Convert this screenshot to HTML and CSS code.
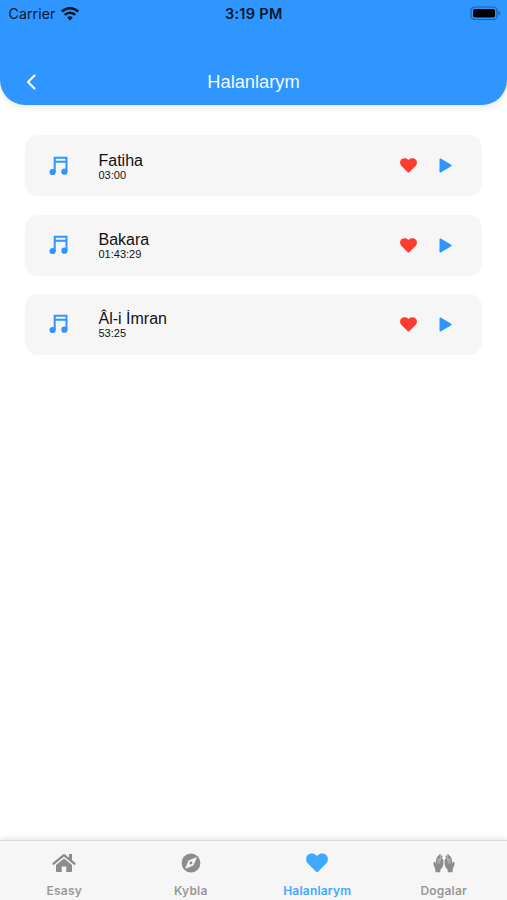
FILE: index.html
```html
<!DOCTYPE html>
<html lang="tk">
<head>
  <meta charset="UTF-8">
  <meta name="viewport" content="width=device-width, initial-scale=1.0">
  <title>Halanlarym</title>
  <link rel="stylesheet" href="styles.css">
</head>
<body>

  <!-- Shared icons -->
  <svg class="sprite" width="0" height="0">
    <symbol id="music" viewBox="0 0 20 20">
      <path d="M5.700 16V1.700H17.500V15.500M5.700 5.800H17.500" fill="none" stroke="currentColor" stroke-width="2"/>
      <circle cx="3.600" cy="16" r="3.100" fill="currentColor"/>
      <circle cx="15.400" cy="15.700" r="3.100" fill="currentColor"/>
    </symbol>
    <symbol id="heart" viewBox="0 0 22 19">
      <path d="M11 18.6c-.4 0-.7-.2-1-.4L1.9 10.1C-.6 7.5-.4 3.400 1.900 1.500 4.600-.8 8.300-.3 10.200 1.700l.8.800.8-.8c1.900-2 5.600-2.500 8.300-.2 2.300 1.900 2.500 6 0 8.600L12 18.200c-.3.2-.6.4-1 .4z" fill="currentColor"/>
    </symbol>
    <symbol id="play" viewBox="0 0 13 15">
      <path d="M1.300 1.300v12.400L11.800 7.500z" fill="currentColor" stroke="currentColor" stroke-width="1.600" stroke-linejoin="round"/>
    </symbol>
  </svg>

  <header class="header">
    <div class="status-bar">
      <div class="carrier">
        <span>Carrier</span>
        <svg width="18" height="14" viewBox="0 0 18 14" fill="none" stroke="#07182b" stroke-width="2.600">
          <path d="M.8 4.600a11.600 11.600 0 0 1 16.400 0M3.800 7.900a7.400 7.400 0 0 1 10.400 0"/>
          <path d="M9 13.500L6.200 10.700a4 4 0 0 1 5.600 0z" fill="#07182b" stroke="none"/>
        </svg>
      </div>
      <span class="time">3:19 PM</span>
      <div class="battery">
        <svg width="31" height="15" viewBox="0 0 31 15">
          <rect x="1" y="1" width="26" height="12.500" rx="3.800" fill="none" stroke="#1c5fa6" stroke-width="1.200"/>
          <rect x="3" y="3" width="22" height="8.500" rx="1.800" fill="#000"/>
          <path d="M28.500 5v4.500q1.700-.7 1.700-2.250T28.500 5z" fill="#1c5fa6"/>
        </svg>
      </div>
    </div>
    <div class="title-bar">
      <svg class="back" width="10" height="16" viewBox="0 0 10 16">
        <path d="M8.500 1.500L2 8l6.500 6.500" fill="none" stroke="#fff" stroke-width="2.100" stroke-linecap="round" stroke-linejoin="round"/>
      </svg>
      <h1>Halanlarym</h1>
    </div>
  </header>

  <main class="list">
    <div class="card">
      <svg class="music"><use href="#music"/></svg>
      <div class="info">
        <h2>Fatiha</h2>
        <p>03:00</p>
      </div>
      <svg class="like"><use href="#heart"/></svg>
      <svg class="play"><use href="#play"/></svg>
    </div>
    <div class="card">
      <svg class="music"><use href="#music"/></svg>
      <div class="info">
        <h2>Bakara</h2>
        <p>01:43:29</p>
      </div>
      <svg class="like"><use href="#heart"/></svg>
      <svg class="play"><use href="#play"/></svg>
    </div>
    <div class="card">
      <svg class="music"><use href="#music"/></svg>
      <div class="info">
        <h2>Âl-i İmran</h2>
        <p>53:25</p>
      </div>
      <svg class="like"><use href="#heart"/></svg>
      <svg class="play"><use href="#play"/></svg>
    </div>
  </main>

  <nav class="tabs">
    <a class="tab">
      <svg width="24" height="20" viewBox="0 0 24 20">
        <path d="M1.500 10.700L12 2.100l10.500 8.600" fill="none" stroke="currentColor" stroke-width="2.300" stroke-linecap="round" stroke-linejoin="round"/>
        <path d="M17 1h3v7l-3-2.500zM12 5.400l8 6.500V18q0 1-1 1h-4.700v-5.500H9.700V19H5q-1 0-1-1v-6.100z" fill="currentColor"/>
      </svg>
      <span>Esasy</span>
    </a>
    <a class="tab">
      <svg width="20" height="20" viewBox="0 0 20 20">
        <circle cx="10" cy="10" r="9.400" fill="currentColor"/>
        <path d="M15.300 4.700L12.200 12.200 4.700 15.300 7.800 7.800z" fill="#f6f6f6" stroke="#f6f6f6" stroke-width=".8" stroke-linejoin="round"/>
        <circle cx="10" cy="10" r="1.400" fill="currentColor"/>
      </svg>
      <span>Kybla</span>
    </a>
    <a class="tab active">
      <svg width="22" height="20"><use href="#heart"/></svg>
      <span>Halanlarym</span>
    </a>
    <a class="tab">
      <svg width="22" height="20" viewBox="0 0 22 20">
        <g id="hand">
          <path d="M2.500 19.300L2.200 16 .5 11.300Q0 9 1.200 8.800q1 .2 1.600 2L8 10l1.200-3.200q1-.6 1.200.8L10.400 11Q10.300 14.500 7.500 16.500l-.3 2.800z" fill="currentColor"/>
          <path d="M3.200 11.500L4 6.200 5.500 3.300M4.600 11.500L7 1.900M6.200 11.500L8.700 3.200M7.700 12L9.300 6.500" fill="none" stroke="currentColor" stroke-width="1.600" stroke-linecap="round"/>
          <path d="M4.600 10.500L6 5.500M6.200 11L7.800 5.400" stroke="#cfcfcf" stroke-width=".6"/>
        </g>
        <use href="#hand" transform="translate(22 0) scale(-1 1)"/>
      </svg>
      <span>Dogalar</span>
    </a>
  </nav>

</body>
</html>
```

FILE: styles.css
```css
* {
  box-sizing: border-box;
}

body {
  margin: 0;
  height: 900px;
  display: flex;
  flex-direction: column;
  overflow: hidden;
  background: #fff;
  color: #111;
  font-family: "Liberation Sans", Arial, sans-serif;
}

h1, h2, p {
  margin: 0;
  font-weight: normal;
}

svg {
  display: block;
  flex: none;
}

.sprite {
  position: absolute;
}

.header {
  height: 104.5px;
  background: #2f95ff;
  border-radius: 0 0 25px 25px;
  box-shadow: 0 2px 8px rgba(0, 0, 0, 0.1);
}

.status-bar {
  display: grid;
  grid-template-columns: 1fr auto 1fr;
  align-items: center;
  height: 27px;
  padding: 0 6px 0 8.5px;
  font-family: Inter, sans-serif;
  font-size: 14px;
  color: #07182b;
}

.carrier {
  display: flex;
  align-items: center;
  gap: 6px;
  letter-spacing: 0.15px;
}

.time {
  font-weight: 600;
  font-size: 14.5px;
  letter-spacing: 0.3px;
  margin-left: -2px;
}

.battery {
  display: flex;
  justify-content: flex-end;
}

.title-bar {
  display: grid;
  grid-template-columns: 40px 1fr 40px;
  align-items: center;
  height: 32px;
  margin-top: 39px;
}

.back {
  margin-left: 26px;
}

h1 {
  text-align: center;
  font-size: 18.3px;
  color: #f4fbff;
}

.list {
  flex: 1;
  display: flex;
  flex-direction: column;
  gap: 18.3px;
  padding: 30.9px 25px 0;
}

.card {
  display: flex;
  align-items: center;
  height: 61px;
  padding: 0 30px 0 24px;
  background: #f6f6f6;
  border-radius: 13px;
}

.music {
  width: 20px;
  height: 20px;
  color: #2f95ff;
}

.info {
  flex: 1;
  margin-left: 29.5px;
  padding-top: 2px;
}

.info h2 {
  font-size: 16px;
  line-height: 17px;
}

.info p {
  font-size: 11px;
  line-height: 13px;
}

.like {
  width: 17px;
  height: 15px;
  color: #ff3b30;
}

.play {
  width: 13px;
  height: 15px;
  margin-left: 22px;
  color: #2f95ff;
}

.tabs {
  display: grid;
  grid-template-columns: repeat(4, 1fr);
  height: 60px;
  padding-left: 1px;
  background: #f6f6f6;
  border-top: 1px solid #dcdcdc;
  box-shadow: 0 -1px 6px rgba(0, 0, 0, 0.12);
}

.tab {
  display: flex;
  flex-direction: column;
  align-items: center;
  gap: 10px;
  padding-top: 12px;
  font-family: Inter, sans-serif;
  font-size: 12px;
  font-weight: 600;
  line-height: 16px;
  letter-spacing: 0.2px;
  color: #999;
}

.tab svg {
  color: #8c8c8c;
}

.active, .active svg {
  color: #3fa9ff;
}
```
